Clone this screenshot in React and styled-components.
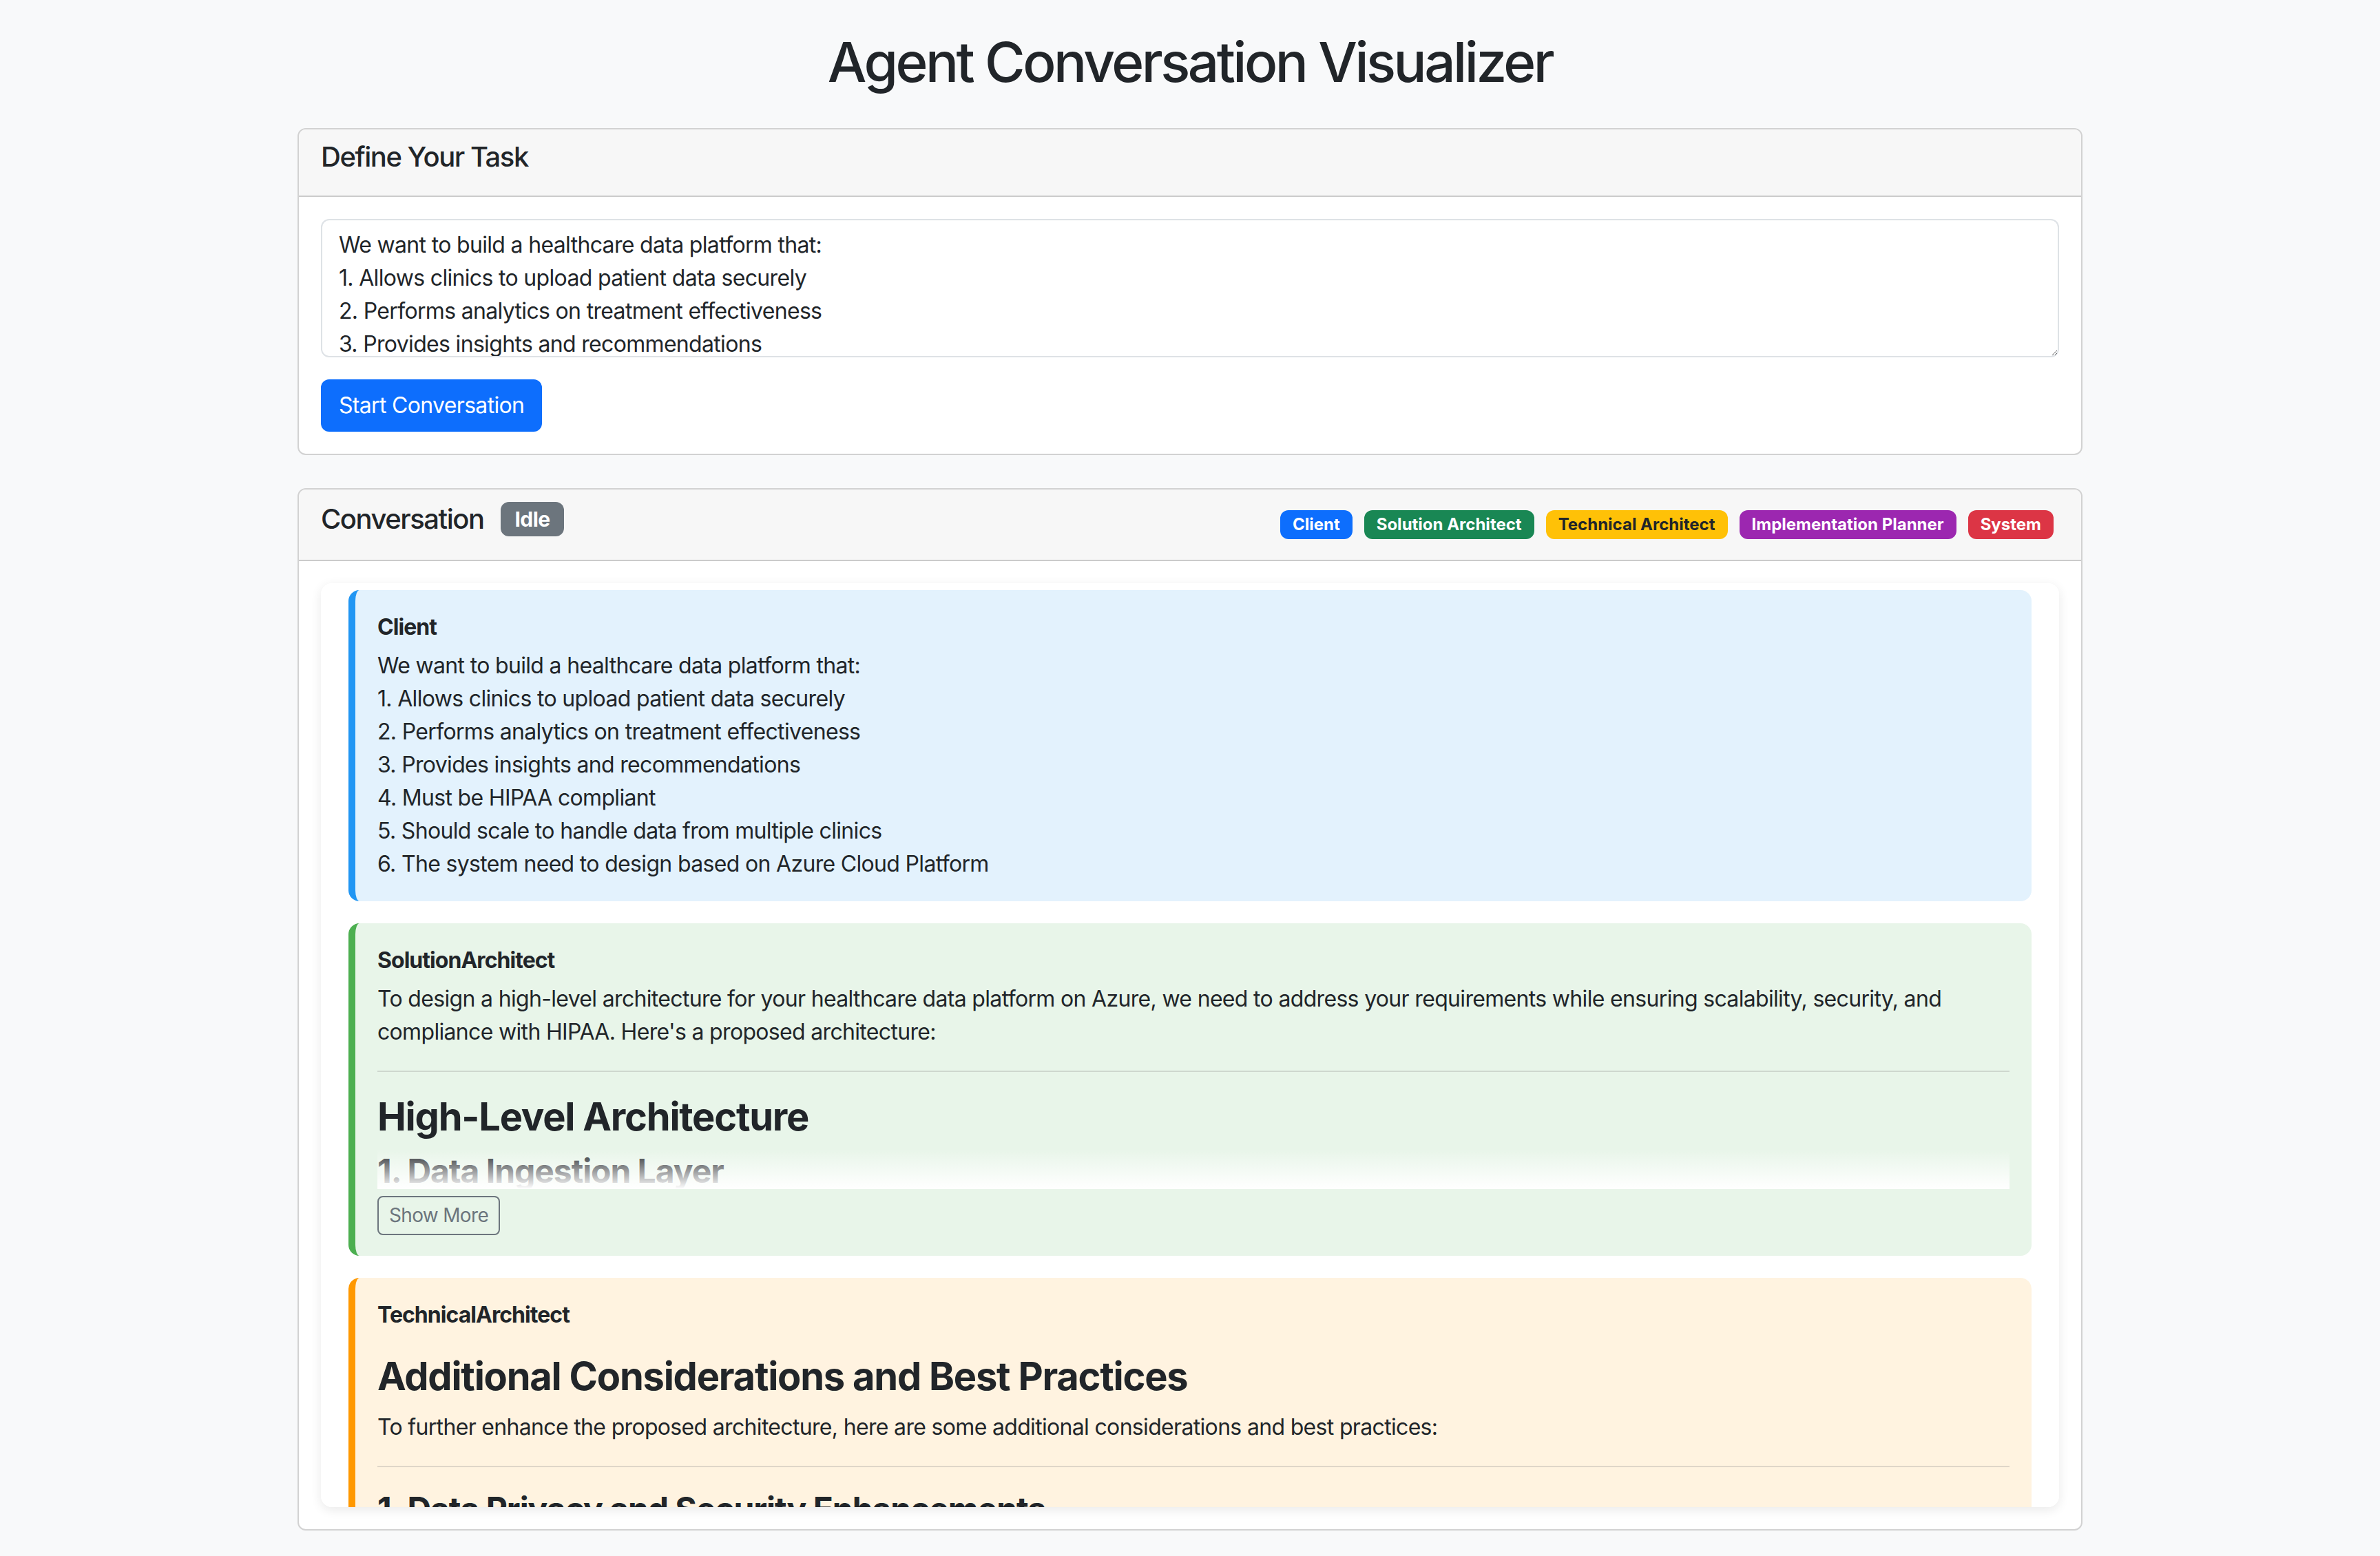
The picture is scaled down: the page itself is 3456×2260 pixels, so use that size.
import styled, { createGlobalStyle } from "styled-components";

const GlobalStyle = createGlobalStyle`
    *, *::before, *::after { box-sizing: border-box; }
    body {
        margin: 0;
        background-color: #f8f9fa;
        font-family: Inter, "Noto Sans", "Liberation Sans", sans-serif;
        font-size: 32px;
        line-height: 1.5;
        letter-spacing: -0.021em;
        color: #212529;
    }
`;

const taskText = `We want to build a healthcare data platform that:
1. Allows clinics to upload patient data securely
2. Performs analytics on treatment effectiveness
3. Provides insights and recommendations
4. Must be HIPAA compliant
5. Should scale to handle data from multiple clinics
6. The system need to design based on Azure Cloud Platform`;

const legend = [
    { label: "Client", bg: "#0d6efd", color: "#fff" },
    { label: "Solution Architect", bg: "#198754", color: "#fff" },
    { label: "Technical Architect", bg: "#ffc107", color: "#212529" },
    { label: "Implementation Planner", bg: "#9c27b0", color: "#fff" },
    { label: "System", bg: "#dc3545", color: "#fff" },
];

const roles = {
    Client: { bg: "#e3f2fd", border: "#2196f3" },
    SolutionArchitect: { bg: "#e8f5e9", border: "#4caf50" },
    TechnicalArchitect: { bg: "#fff3e0", border: "#ff9800" },
};

export default function App() {
    return (
        <>
            <GlobalStyle />
            <Container>
                <Title>Agent Conversation Visualizer</Title>

                <Card>
                    <CardHeader>
                        <HeaderTitle>Define Your Task</HeaderTitle>
                    </CardHeader>
                    <CardBody>
                        <TaskInput defaultValue={taskText} />
                        <PrimaryButton>Start Conversation</PrimaryButton>
                    </CardBody>
                </Card>

                <Card>
                    <CardHeader $flex>
                        <ConvTitle>
                            Conversation
                            <StatusBadge>Idle</StatusBadge>
                        </ConvTitle>
                        <Legend>
                            {legend.map((item) => (
                                <LegendBadge key={item.label} $bg={item.bg} $color={item.color}>
                                    {item.label}
                                </LegendBadge>
                            ))}
                        </Legend>
                    </CardHeader>
                    <CardBody>
                        <MessageList>
                            <Message $role="Client">
                                <Sender>Client</Sender>
                                <PlainText>{taskText}</PlainText>
                            </Message>

                            <Message $role="SolutionArchitect">
                                <Sender>SolutionArchitect</Sender>
                                <Collapsed>
                                    <Markdown>
                                        <p>
                                            To design a high-level architecture for your healthcare data platform on
                                            Azure, we need to address your requirements while ensuring scalability,
                                            security, and compliance with HIPAA. Here's a proposed architecture:
                                        </p>
                                        <hr />
                                        <h3>High-Level Architecture</h3>
                                        <h4>1. Data Ingestion Layer</h4>
                                        <ul>
                                            <li>Azure API Management</li>
                                            <li>Azure Data Factory</li>
                                        </ul>
                                    </Markdown>
                                    <Fade />
                                </Collapsed>
                                <OutlineButton>Show More</OutlineButton>
                            </Message>

                            <Message $role="TechnicalArchitect">
                                <Sender>TechnicalArchitect</Sender>
                                <Markdown $lead>
                                    <h3>Additional Considerations and Best Practices</h3>
                                    <p>
                                        To further enhance the proposed architecture, here are some additional
                                        considerations and best practices:
                                    </p>
                                    <hr />
                                    <h4>1. Data Privacy and Security Enhancements</h4>
                                    <p>Use Azure Key Vault for secrets and customer-managed keys.</p>
                                </Markdown>
                            </Message>
                        </MessageList>
                    </CardBody>
                </Card>
            </Container>
        </>
    );
}

const Container = styled.main`
    max-width: 2640px;
    margin: 0 auto;
    padding: 0 24px;
`;
const Title = styled.h1`
    font-size: 80px;
    font-weight: 500;
    line-height: 1.2;
    letter-spacing: -0.044em;
    text-align: center;
    margin: 42px 0 48px;
`;
const Card = styled.section`
    background-color: #fff;
    border: 2px solid rgba(0, 0, 0, 0.175);
    border-radius: 12px;
    margin-bottom: 48px;
    overflow: hidden;
`;
const CardHeader = styled.header`
    padding: 16px 32px;
    background-color: #f7f7f7;
    border-bottom: 2px solid rgba(0, 0, 0, 0.175);

    display: ${(p) => (p.$flex ? "flex" : "block")};
    justify-content: space-between;
    align-items: center;
`;
const HeaderTitle = styled.h5`
    font-size: 40px;
    font-weight: 500;
    line-height: 1.2;
    letter-spacing: -0.037em;
    margin: 0 0 16px;
`;
const ConvTitle = styled(HeaderTitle)`
    display: flex;
    align-items: center;
    min-height: 54px;
`;
const StatusBadge = styled.span`
    margin-left: 24px;
    padding: 10px 21px;
    font-size: 30px;
    font-weight: 700;
    line-height: 1;
    letter-spacing: -0.02em;
    color: #fff;
    background-color: #6c757d;
    border-radius: 12px;
`;
const Legend = styled.div`
    display: flex;
    align-items: center;
    gap: 9px;
`;
const LegendBadge = styled.span`
    margin-right: 8px;
    padding: 8px 18px;
    font-size: 24px;
    font-weight: 700;
    line-height: 1.05;
    letter-spacing: 0;
    white-space: nowrap;
    color: ${(p) => p.$color};
    background-color: ${(p) => p.$bg};
    border-radius: 12px;
`;
const CardBody = styled.div`
    padding: 32px;
`;
const TaskInput = styled.textarea`
    display: block;
    width: 100%;
    height: 201px;
    margin-bottom: 32px;
    padding: 12px 24px;
    font: inherit;
    letter-spacing: inherit;
    color: #212529;
    border: 2px solid #dee2e6;
    border-radius: 12px;
    resize: vertical;
    overflow: hidden;
`;
const PrimaryButton = styled.button`
    padding: 12px 24px;
    font: inherit;
    letter-spacing: inherit;
    color: #fff;
    background-color: #0d6efd;
    border: 2px solid #0d6efd;
    border-radius: 12px;
    cursor: pointer;
`;
const MessageList = styled.div`
    height: 1342px;
    overflow-y: auto;
    scrollbar-width: none;
    padding: 10px 40px 0 40px;
    background-color: #fff;
    border-radius: 16px;
    box-shadow: 0 4px 16px rgba(0, 0, 0, 0.09);
    &::-webkit-scrollbar { display: none; }
`;
const Message = styled.article`
    margin-bottom: 32px;
    padding: 30px 32px 30px;
    background-color: ${(p) => roles[p.$role].bg};
    border-left: 10px solid ${(p) => roles[p.$role].border};
    border-radius: 16px;
`;
const Sender = styled.div`
    font-weight: 700;
    letter-spacing: -0.03em;
    margin-bottom: 8px;
`;
const PlainText = styled.div`
    white-space: pre-wrap;
`;
const Collapsed = styled.div`
    position: relative;
    max-height: 300px;
    overflow: hidden;
`;
const Fade = styled.div`
    position: absolute;
    left: 0;
    right: 0;
    bottom: 0;
    height: 58px;
    background: linear-gradient(to bottom, rgba(255, 255, 255, 0), #fff);
`;
const Markdown = styled.div`
    padding-top: ${(p) => (p.$lead ? "24px" : "0")};

    p {
        margin: 0 0 32px;
    }
    hr {
        margin: 32px 0;
        border: 0;
        border-top: 2px solid currentColor;
        opacity: 0.25;
    }
    h3 {
        font-size: 56px;
        font-weight: 700;
        line-height: 1.2;
        letter-spacing: -0.022em;
        margin: 0 0 16px;
    }
    h4 {
        font-size: 48px;
        font-weight: 700;
        line-height: 1.2;
        letter-spacing: -0.022em;
        margin: 0 0 16px;
    }
`;
const OutlineButton = styled.button`
    margin-top: 10px;
    padding: 7px 15px;
    font: inherit;
    font-size: 28px;
    line-height: 1.4;
    letter-spacing: inherit;
    color: #6c757d;
    background: transparent;
    border: 2px solid #6c757d;
    border-radius: 8px;
    cursor: pointer;
`;
